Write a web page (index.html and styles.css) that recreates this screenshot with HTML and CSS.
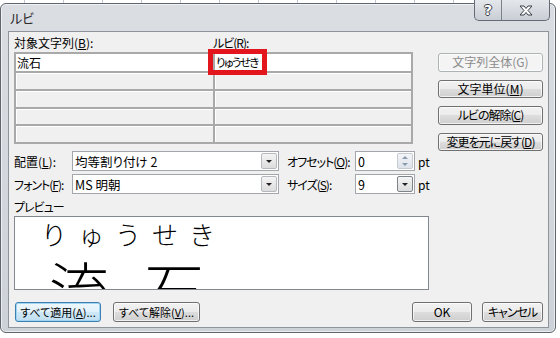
FILE: index.html
```html
<!DOCTYPE html>
<html lang="ja">
<head>
  <meta charset="UTF-8" />
  <title>ルビ</title>
  <link rel="stylesheet" href="styles.css">
</head>
<body>
  <div class="window">
    <div class="titlebar">
      <span class="title">ルビ</span>
      <div class="caps">
        <span class="cap help">?</span>
        <span class="cap close">
          <svg width="14" height="11" viewBox="0 0 14 11"><path d="M1 1h4l2 2.5L9 1h4l-4 4.5 4 4.5H9L7 7.5 5 10H1l4-4.5z" fill="#fff" stroke="#3a3f47" stroke-width="1" stroke-linejoin="round"/></svg>
        </span>
      </div>
    </div>

    <div class="client">
      <div class="top">
        <div class="ruby-area">
          <div class="heads">
            <span class="head-base">対象文字列(<u>B</u>):</span>
            <span class="kana">ルビ(<u>R</u>):</span>
          </div>
          <div class="grid">
            <div class="cell on">流石</div>
            <div class="cell on kana tight">りゅうせき</div>
            <div class="cell"></div><div class="cell"></div>
            <div class="cell"></div><div class="cell"></div>
            <div class="cell"></div><div class="cell"></div>
            <div class="cell"></div><div class="cell"></div>
          </div>
          <div class="mark"></div>
        </div>
        <div class="side">
          <button class="btn" disabled>文字列全体(G)</button>
          <button class="btn">文字単位(<u>M</u>)</button>
          <button class="btn kana">ルビの解除(<u>C</u>)</button>
          <button class="btn kana">変更を元に戻す(<u>D</u>)</button>
        </div>
      </div>

      <div class="options">
        <span class="lbl">配置(<u>L</u>):</span>
        <div class="combo"><span class="val">均等割り付け 2</span><span class="drop"></span></div>
        <span class="lbl right kana">オフセット(<u>O</u>):</span>
        <div class="combo"><span class="val">0</span><span class="spin"><i class="up"></i><i class="down"></i></span></div>
        <span class="unit">pt</span>

        <span class="lbl kana">フォント(<u>F</u>):</span>
        <div class="combo"><span class="val">MS 明朝</span><span class="drop"></span></div>
        <span class="lbl right kana">サイズ(<u>S</u>):</span>
        <div class="combo"><span class="val">9</span><span class="drop boxed"></span></div>
        <span class="unit">pt</span>
      </div>

      <div class="preview-label kana">プレビュー</div>
      <div class="preview">
        <div class="p-ruby">りゅうせき</div>
        <div class="p-base">流石</div>
      </div>

      <div class="bottom">
        <button class="btn default wide small">すべて適用(<u>A</u>)...</button>
        <button class="btn wide2 small">すべて解除(<u>V</u>)...</button>
        <button class="btn ok">OK</button>
        <button class="btn cancel kana">キャンセル</button>
      </div>
    </div>
  </div>
</body>
</html>
```

FILE: styles.css
```css
* {
  box-sizing: border-box;
}
body {
  margin: 0;
  width: 560px;
  height: 338px;
  padding-top: 3px;
  overflow: hidden;
  background: #fff linear-gradient(90deg, #c3c9d2 1px, transparent 1px) 24px 0 / 39px 3px repeat-x;
  font-family: "Noto Sans CJK JP", sans-serif;
  font-size: 12px;
  font-feature-settings: "palt";
  color: #000;
}
u {
  text-decoration: underline;
  text-underline-offset: 1px;
}
.kana {
  letter-spacing: -1px;
  white-space: nowrap;
}

/* window frame */
.window {
  width: 556px;
  height: 330px;
  border: 1px solid #5f666f;
  border-radius: 6px;
  background: linear-gradient(#dadee3, #cdd2d8);
  box-shadow: inset 0 0 0 1px rgba(255,255,255,0.6);
  padding: 0 6px 4px 7px;
}
.titlebar {
  height: 27px;
  display: flex;
  justify-content: space-between;
}
.title {
  align-self: center;
  padding-left: 2px;
  font-size: 13px;
  color: #2a2a2a;
}
.caps {
  display: flex;
  height: 21px;
  margin-top: -4px;
  margin-right: -1px;
  border: 1px solid #646b74;
  border-top: none;
  border-radius: 0 0 5px 5px;
  overflow: hidden;
  background: linear-gradient(#e4e7eb, #c9ced5);
}
.cap {
  display: flex;
  align-items: center;
  justify-content: center;
}
.help {
  width: 27px;
  border-right: 1px solid #7a818a;
  font: bold 14px "DejaVu Sans", sans-serif;
  color: #fff;
  text-shadow: 1px 0 #3a3f47, -1px 0 #3a3f47, 0 1px #3a3f47, 0 -1px #3a3f47;
}
.close {
  width: 47px;
}

/* client area */
.client {
  height: 297px;
  border: 1px solid #8d949c;
  background: #f0f0f0;
  padding: 0 5px;
}
.top {
  display: flex;
  gap: 25px;
  height: 119px;
}
.ruby-area {
  position: relative;
  width: 399px;
}
.heads {
  height: 20px;
  padding-top: 2px;
  line-height: 18px;
  display: flex;
}
.head-base {
  width: 199px;
}
.grid {
  display: grid;
  grid-template-columns: 197px 196px;
  grid-template-rows: 17px 16px 16px 15px 16px;
  gap: 2px;
  padding: 2px;
  background: #a9a9a9;
}
.cell {
  background: #f0f0f0;
  box-shadow: inset 1px 1px 0 #fff;
}
.cell.on {
  background: #fff;
  line-height: 17px;
  padding-left: 1px;
}
.cell.tight {
  font-size: 11.5px;
  letter-spacing: -1.6px;
}
.mark {
  position: absolute;
  left: 194px;
  top: 17px;
  width: 59px;
  height: 26px;
  border: 5px solid #e2161c;
}
.side {
  width: 105px;
  padding-top: 21px;
  display: flex;
  flex-direction: column;
  gap: 8px;
}
.side .btn {
  height: 19px;
}

/* buttons */
.btn {
  font-family: inherit;
  font-size: 12px;
  font-feature-settings: "palt";
  color: #000;
  padding: 0;
  height: 20px;
  border: 1px solid #707070;
  border-radius: 3px;
  background: linear-gradient(#f2f2f2 0%, #ebebeb 49%, #dddddd 50%, #cfcfcf 100%);
  box-shadow: inset 0 0 0 1px rgba(255,255,255,0.7);
  line-height: 16px;
}
.btn.small {
  font-size: 11px;
  white-space: nowrap;
}
.btn:disabled {
  border-color: #adb2b5;
  background: #f4f4f4;
  color: #8b8b8b;
}
.btn.default {
  border-color: #3c7fb1;
  background: linear-gradient(#eef7fc 0%, #e1f1fb 49%, #cfe8f7 50%, #c0dff2 100%);
  box-shadow: inset 0 0 0 1px #9fd5f3;
}

/* options */
.options {
  display: grid;
  grid-template-columns: 58px 207px 76px 60px 1fr;
  grid-template-rows: 20px 20px;
  row-gap: 3px;
  align-items: center;
}
.lbl {
  white-space: nowrap;
}
.lbl.right {
  padding-left: 8px;
}
.unit {
  padding-left: 3px;
}
.combo {
  height: 20px;
  display: flex;
  align-items: center;
  background: #fff;
  border: 1px solid #a3a7ad;
}
.val {
  flex: 1;
  padding-left: 2px;
  font-size: 12.5px;
}
.drop {
  position: relative;
  width: 16px;
  height: 16px;
  margin-right: 1px;
  border: 1px solid #b5b9be;
  border-radius: 2px;
  background: linear-gradient(#f4f4f4, #dcdcdc);
}
.drop::after {
  content: "";
  position: absolute;
  left: 4px;
  top: 6px;
  border-left: 3px solid transparent;
  border-right: 3px solid transparent;
  border-top: 3px solid #222;
}
.drop.boxed {
  border-color: #7e848b;
}
.spin {
  width: 16px;
  height: 16px;
  margin-right: 1px;
  display: flex;
  flex-direction: column;
  border: 1px solid #c6cbd1;
  border-radius: 2px;
  background: linear-gradient(#f3f5f8, #dde3ea);
}
.spin i {
  flex: 1;
  display: flex;
  align-items: center;
  justify-content: center;
}
.spin i::after {
  content: "";
  border-left: 3px solid transparent;
  border-right: 3px solid transparent;
}
.spin .up::after {
  border-bottom: 3px solid #8a9bb0;
}
.spin .down::after {
  border-top: 3px solid #8a9bb0;
}

/* preview */
.preview-label {
  height: 22px;
  padding-top: 4px;
  line-height: 18px;
}
.preview {
  width: 415px;
  height: 74px;
  border: 1px solid #828790;
  background: #fff;
  overflow: hidden;
  padding: 4px 0 0 26px;
  font-feature-settings: normal;
  font-weight: 300;
}
.p-ruby {
  font-size: 26px;
  line-height: 26px;
  letter-spacing: 11px;
}
.p-base {
  margin-top: 10px;
  padding-left: 8px;
  font-size: 60px;
  line-height: 60px;
  letter-spacing: 35px;
}

/* bottom row */
.bottom {
  display: flex;
  margin-top: 12px;
  padding-left: 1px;
}
.wide {
  width: 86px;
}
.wide2 {
  width: 87px;
  margin-left: 12px;
}
.ok {
  width: 60px;
  margin-left: auto;
}
.cancel {
  width: 61px;
  margin-left: 10px;
}
```
